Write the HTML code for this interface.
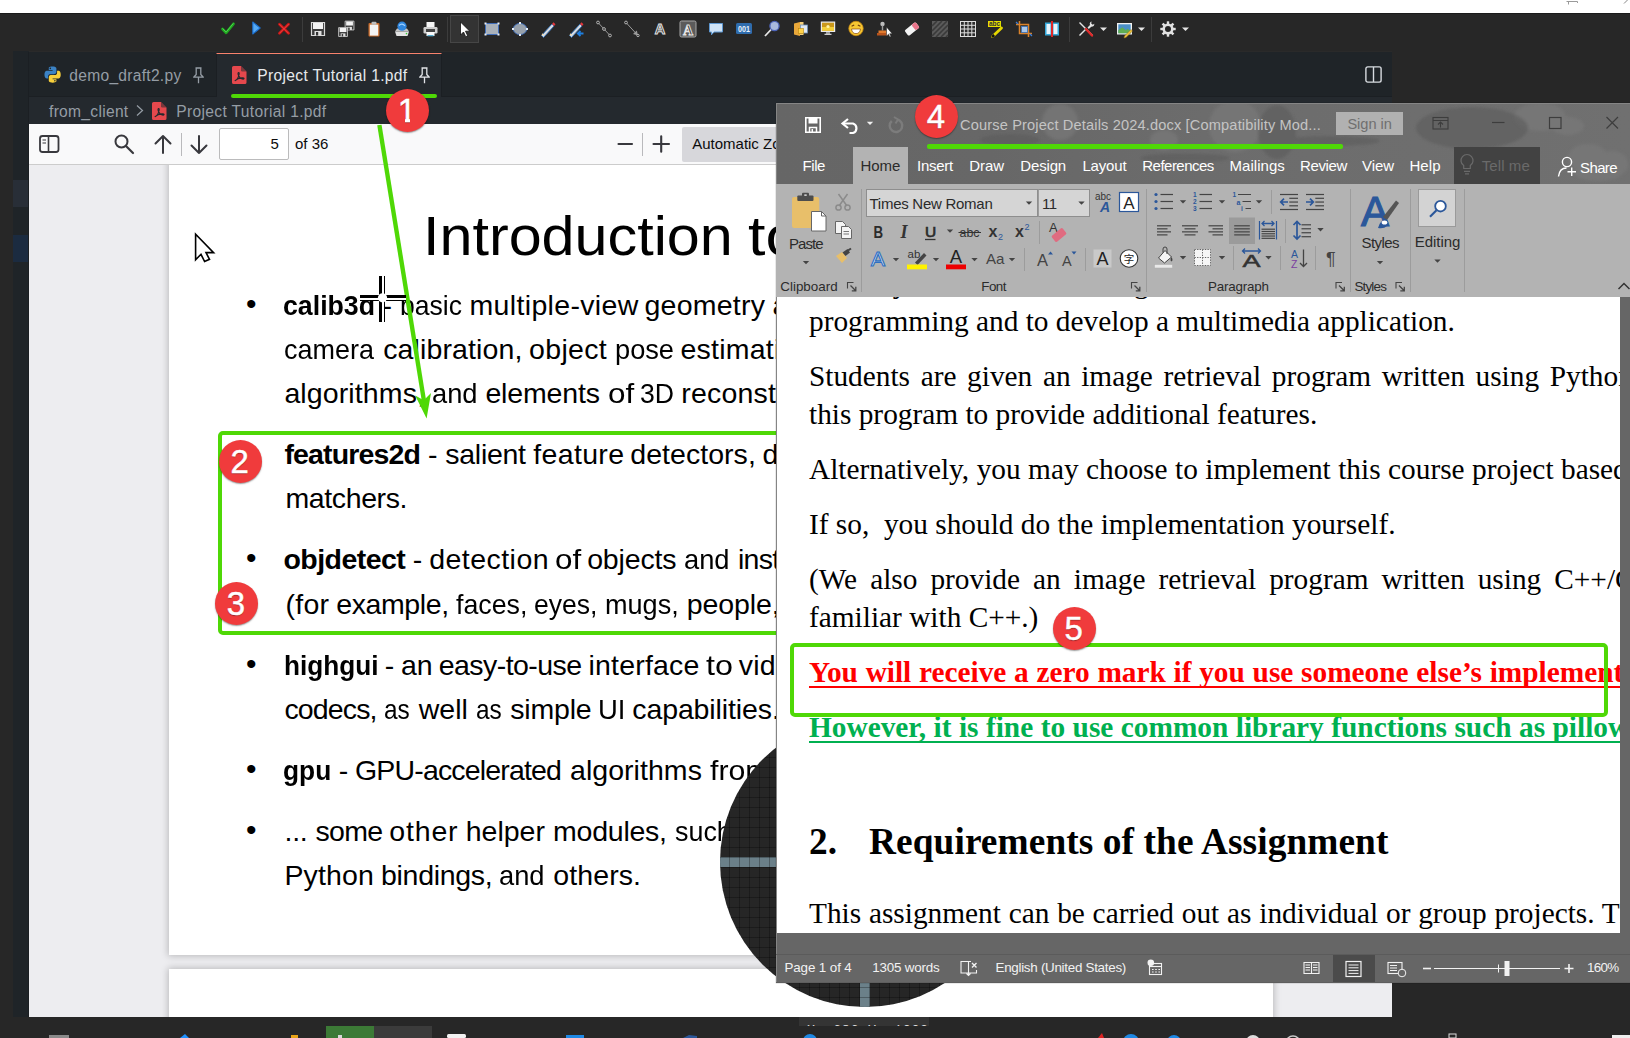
<!DOCTYPE html>
<html lang="en"><head><meta charset="utf-8"><title>Annotated screenshot</title>
<style>
html,body{margin:0;padding:0}
body{width:1630px;height:1038px;overflow:hidden;position:relative;background:#272727;font-family:'Liberation Sans',sans-serif}
div{box-sizing:border-box}
svg{position:absolute;overflow:visible}
.abs{position:absolute}
.step{position:absolute;border-radius:50%;background:#f03b3c;color:#fff;text-align:center;font:normal 33px 'Liberation Sans',sans-serif;box-shadow:0 1px 1.5px rgba(0,0,0,.4);text-shadow:0 1px 1px rgba(0,0,0,.35);-webkit-text-stroke:.45px #fff;padding-right:1.5px}
</style></head><body>

<div style="position:absolute;left:0px;top:0px;width:1630px;height:13px;background:#fff;"></div>
<svg style="left:0;top:0" width="1630" height="13"><path d="M1566.5 1.5h11v1.5M1568.5 4.5v-3" stroke="#9a9a9a" fill="none"/><path d="M1624 3.5l4-4" stroke="#888" fill="none"/></svg>
<div id="toolbar" class="abs" style="left:0;top:13px;width:1630px;height:38px;background:#272727;border-top:1px solid #1a1a1a">
<svg style="left:0;top:-14px" width="1630" height="64"><g transform="translate(220.0,20.5) scale(1)"><path d="M2.5 8.5l3.6 3.8l7.4-9" fill="none" stroke="#1fa51f" stroke-width="2.7" stroke-linecap="round" stroke-linejoin="round"/><path d="M2.8 8.3l3.3 3.400l7-8.500" fill="none" stroke="#4fd24f" stroke-width="1" stroke-linecap="round"/></g><g transform="translate(248.5,20.0) scale(1)"><path d="M4.3 2l7.400 6l-7.400 6z" fill="#55aaf5" stroke="#1b6fd0" stroke-width="1.100" stroke-linejoin="round"/></g><g transform="translate(276.0,20.7) scale(1)"><path d="M3.500 3.500l9 9M12.500 3.500l-9 9" fill="none" stroke="#c81414" stroke-width="2.800" stroke-linecap="round"/><path d="M3.500 3.500l9 9M12.500 3.500l-9 9" fill="none" stroke="#f04a4a" stroke-width=".900" stroke-linecap="round"/></g><path d="M302.5 17v25M447.5 17v25M1069.5 17v25M1151.5 17v25" stroke="#3c3c3c" stroke-width="1"/><g transform="translate(310.0,21.0) scale(1)"><path d="M1.5 1.5h13v13h-13z" fill="#3a3a3a" stroke="#d8d8d8" stroke-width="1.2"/><rect x="3" y="2" width="10" height="6" fill="#f2f2f2"/><rect x="4.5" y="10" width="7" height="4.5" fill="#e0e0e0"/><rect x="6" y="11" width="2.2" height="3.5" fill="#333"/></g><g transform="translate(344.1,20.1) scale(0.68)"><path d="M1.5 1.5h13v13h-13z" fill="#3a3a3a" stroke="#d8d8d8" stroke-width="1.2"/><rect x="3" y="2" width="10" height="6" fill="#f2f2f2"/><rect x="4.5" y="10" width="7" height="4.5" fill="#e0e0e0"/><rect x="6" y="11" width="2.2" height="3.5" fill="#333"/></g><g transform="translate(337.6,26.6) scale(0.68)"><path d="M1.5 1.5h13v13h-13z" fill="#3a3a3a" stroke="#d8d8d8" stroke-width="1.2"/><rect x="3" y="2" width="10" height="6" fill="#f2f2f2"/><rect x="4.5" y="10" width="7" height="4.5" fill="#e0e0e0"/><rect x="6" y="11" width="2.2" height="3.5" fill="#333"/></g><g transform="translate(366.0,21.0) scale(1)"><rect x="2.5" y="2" width="11" height="13.5" rx="1" fill="#c96a28"/><rect x="3.8" y="3.6" width="8.4" height="11" fill="#f4f4f4"/><rect x="5.5" y="0.8" width="5" height="3" rx="1" fill="#bdbdbd"/></g><g transform="translate(394.0,21.0) scale(1)"><path d="M1 10.5h14l-1.5 4.5h-11z" fill="#e3e3e3"/><path d="M1 10.5l2-3h10l2 3z" fill="#c5c5c5"/><circle cx="8" cy="5.2" r="4.6" fill="#2f86dd"/><path d="M5 4.5q3-3 6 .3" stroke="#9fd0ff" fill="none" stroke-width="1.2"/><circle cx="12.5" cy="12.6" r=".8" fill="#3c3"/></g><g transform="translate(422.5,21.0) scale(1)"><rect x="4" y="1" width="8" height="6" fill="#f5f5f5"/><rect x="1" y="6" width="14" height="6.5" rx="1.2" fill="#cfcfcf"/><rect x="3.5" y="8" width="9" height="3" fill="#444"/><rect x="4" y="11" width="8" height="4" fill="#fafafa"/><rect x="5" y="14" width="6" height="1.3" fill="#5ac"/></g><rect x="450.5" y="15.5" width="28" height="27" fill="#333333" stroke="#464646"/><g transform="translate(456.0,21.0) scale(1)"><path d="M4.5 1v13l3-3l2.2 4.7l2-0.9l-2.2-4.6h4.3z" fill="#fff" stroke="#111" stroke-width=".8" stroke-linejoin="round"/></g><g transform="translate(484.0,21.0) scale(1)"><rect x="1.500" y="2.500" width="13" height="11" fill="#a9b1ba" stroke="#3d6fc0" stroke-width=".900"/><g fill="#e8effa"><rect x=".500" y="1.500" width="2" height="2"/><rect x="13.500" y="1.500" width="2" height="2"/><rect x=".500" y="12.500" width="2" height="2"/><rect x="13.500" y="12.500" width="2" height="2"/></g></g><g transform="translate(512.0,21.0) scale(1)"><ellipse cx="8" cy="8" rx="6.700" ry="5.600" fill="#98a1ab" stroke="#3d6fc0" stroke-width=".900"/><g fill="#dfe9f7"><rect x="7" y="1" width="2" height="2"/><rect x="7" y="13" width="2" height="2"/><rect x="0" y="7" width="2" height="2"/><rect x="14" y="7" width="2" height="2"/></g></g><g transform="translate(540.0,21.0) scale(1)"><path d="M1.5 14.5l10.5-11.5l2 2l-10.5 11.5z" fill="#d9dde2" stroke="#2f6fb7" stroke-width=".9"/><path d="M12 3l1.5-1.7l2 2l-1.5 1.7z" fill="#e2363a"/><path d="M1.5 14.5l0.8-2.2l1.5 1.5z" fill="#f1d9a0"/></g><g transform="translate(568.0,21.0) scale(1)"><path d="M1.5 14.5l10.5-11.5l2 2l-10.5 11.5z" fill="#d9dde2" stroke="#2f6fb7" stroke-width=".9"/><path d="M12 3l1.5-1.7l2 2l-1.5 1.7z" fill="#e2363a"/><path d="M1.5 14.5l0.8-2.2l1.5 1.5z" fill="#f1d9a0"/><path d="M15.5 12.5h-5M12.5 10l-2.7 2.5l2.7 2.5" stroke="#1e7fe0" stroke-width="1.8" fill="none"/></g><g transform="translate(596.0,21.0) scale(1)"><path d="M2 1.5l12 13" stroke="#9a9a9a" stroke-width="1"/><g fill="#262626" stroke="#bdbdbd" stroke-width=".9"><circle cx="2" cy="1.5" r="1.4"/><circle cx="8" cy="8" r="1.4"/><circle cx="14" cy="14.5" r="1.4"/></g></g><g transform="translate(624.0,21.0) scale(1)"><path d="M2 1.5l11 12" stroke="#9a9a9a" stroke-width="1"/><path d="M14 14.5l-5-1.6l3.8-3.4z" fill="#9a9a9a"/><g fill="#262626" stroke="#bdbdbd" stroke-width=".9"><circle cx="2" cy="1.5" r="1.4"/><circle cx="14" cy="14.5" r="1.2"/></g></g><text x="660" y="34.200" font-family="'Liberation Sans',sans-serif" font-weight="bold" font-size="14.500" text-anchor="middle" fill="#262626" stroke="#e2e2e2" stroke-width="1">A</text><rect x="680" y="21" width="16" height="16" rx="1.5" fill="#5b5b5b" stroke="#a8a8a8" stroke-width="1"/><text x="688" y="34.6" font-family="'Liberation Serif',serif" font-weight="bold" font-size="14" text-anchor="middle" fill="#3a3a3a" stroke="#e6e6e6" stroke-width=".9">A</text><g transform="translate(708.0,20.5) scale(1)"><path d="M1.5 3h13v8.5h-8.5l-2.5 2.8v-2.8h-2z" fill="#cfe2f5" stroke="#5f98d1" stroke-width="1"/></g><rect x="736" y="23" width="16" height="11" rx="1.5" fill="#2f6cad"/><text x="744" y="32.2" font-family="'Liberation Sans',sans-serif" font-weight="bold" font-size="9" text-anchor="middle" fill="#e8f1fb" textLength="12" lengthAdjust="spacingAndGlyphs">001</text><g transform="translate(764.0,21.0) scale(1)"><path d="M1 15l7-7.5" stroke="#e8e8e8" stroke-width="1.8"/><circle cx="10.5" cy="5" r="4.6" fill="#a9b9dd" stroke="#4c63b8" stroke-width="1.3"/></g><g transform="translate(792.0,21.0) scale(1)"><path d="M2 2.5l6-1.5v14l-6-1.5z" fill="#e9a83a"/><path d="M8 1h3.5v13h-3.5z" fill="#f5cf7a"/><rect x="8.5" y="4" width="7" height="8" fill="#dfe8f3" stroke="#6b8fb8" stroke-width=".8"/><rect x="6.5" y="7.5" width="5" height="5" fill="#ffd24a" stroke="#b8860b" stroke-width=".6"/></g><g transform="translate(820.0,20.5) scale(1)"><rect x=".8" y="1" width="14.4" height="10.5" fill="#e9e9e9"/><rect x="2" y="2.2" width="12" height="8" fill="#c9971a"/><rect x="2" y="6.5" width="12" height="3.7" fill="#f2cf3a"/><circle cx="8" cy="6" r="1.6" fill="#fff3a8"/><rect x="6" y="11.5" width="4" height="2" fill="#9a9a9a"/><rect x="4.5" y="13.2" width="7" height="1.3" fill="#cfcfcf"/></g><g transform="translate(848.0,20.5) scale(1)"><circle cx="8" cy="8" r="7.2" fill="#f7c733" stroke="#c98a10" stroke-width=".8"/><path d="M3.5 8.5h9q-.6 4.6-4.5 4.6t-4.500-4.600z" fill="#fff" stroke="#8a4a10" stroke-width=".7"/><path d="M3.6 5.8l2.600-1.200M12.4 5.800l-2.600-1.200" stroke="#6b3b0a" stroke-width="1.1"/></g><g transform="translate(876.0,21.0) scale(1)"><circle cx="6.5" cy="3" r="2.2" fill="#bdbdbd"/><rect x="5.8" y="4.5" width="1.4" height="5" fill="#9a9a9a"/><path d="M2.5 9.500h8v2.500h-8z" fill="#e07b2e"/><rect x="1" y="12" width="11" height="2.5" fill="#b9541c"/><path d="M10.500 6v9l2-1.800l1.300 2.800l1.200-.6l-1.300-2.700h2.500z" fill="#fff" stroke="#222" stroke-width=".5"/></g><g transform="translate(904.0,21.0) scale(1)"><g transform="rotate(-38 8 8)"><rect x="1" y="4.500" width="14" height="7" rx="1.500" fill="#f3f3f3"/><rect x="10" y="4.500" width="5" height="7" rx="1.500" fill="#e8748a"/></g></g><rect x="932" y="21" width="16" height="16" fill="#5a5a5a"/><path d="M932 26l5-5M932 31l10-10M932 36l15-15M936 37l12-12M941 37l7-7M946 37l2-2" stroke="#3a3a3a" stroke-width="1.600"/><rect x="960.500" y="21.500" width="15" height="15" fill="#2b2b2b" stroke="#dedede"/><path d="M964.300 21.500v15M968 21.500v15M971.800 21.500v15M960.500 25.300h15M960.500 29h15M960.500 32.800h15" stroke="#dedede" stroke-width="1"/><rect x="988" y="21" width="13" height="6" fill="#e8e000"/><text x="994.500" y="26.300" font-family="'Liberation Sans',sans-serif" font-weight="bold" font-size="6.500" text-anchor="middle" fill="#333">abc</text><path d="M992.500 36.500l9-8.500" stroke="#e6d800" stroke-width="2.800" stroke-linecap="round"/><path d="M992 37l2.200-2" stroke="#111" stroke-width="2.400"/><g transform="translate(1016.0,21.0) scale(1)"><path d="M3.500 0v12.500h12.500M0 3.500h12.500v12.500" fill="none" stroke="#d9822b" stroke-width="1.500"/><rect x="5.500" y="5.500" width="6" height="6" fill="#a9c7ea" stroke="#3f74b8" stroke-width=".8"/><path d="M0 1l2 2M16 15l-2-2" stroke="#3b7fd9" stroke-width="1.200"/></g><g transform="translate(1044.0,21.0) scale(1)"><rect x="1" y="1.500" width="14" height="13" fill="#35a7d8"/><rect x="2.500" y="3" width="4" height="10" fill="#e9f4fb"/><rect x="9.500" y="3" width="4" height="10" fill="#e9f4fb"/><rect x="7" y="0" width="2" height="16" fill="#e02626"/></g><g transform="translate(1078.0,21.0) scale(1)"><path d="M1.500 1.500l13 13" stroke="#e4e4e4" stroke-width="1.400"/><path d="M1.500 14.500l6.500-6.500" stroke="#e4e4e4" stroke-width="1.400"/><path d="M8 8l6 6.500" stroke="#e02a2a" stroke-width="2.400" stroke-linecap="round"/><path d="M9.500 6.500l2.500-2.500q-1-2.500 1.600-3.500l-.4 2l1.600 1.200l1.500-1q.2 3-3 3l-2.500 2.300z" fill="#e4e4e4"/></g><path d="M1100.0 27.5h7l-3.5 3.5z" fill="#e6e6e6"/><g transform="translate(1116.5,21.0) scale(1)"><rect x=".5" y="2" width="15" height="11.500" fill="#f2f2f2"/><rect x="1.800" y="3.300" width="12.400" height="8.900" fill="#4a90c8"/><path d="M1.800 12.200v-3l4-3l3.500 3l2-1.500l2.900 2.500v2z" fill="#5fae54"/><path d="M8 15l6.500-6.500l1.500 1.500l-6.500 6.500l-2 .5z" fill="#f0c23a" stroke="#8a6d1a" stroke-width=".5"/></g><path d="M1138.0 27.5h7l-3.5 3.5z" fill="#e6e6e6"/><g transform="translate(1160.0,21.0) scale(1)"><circle cx="8" cy="8" r="4.300" fill="none" stroke="#e2e2e2" stroke-width="2.600"/><g stroke="#e2e2e2" stroke-width="2.400"><path d="M8 .3v3" transform="rotate(0 8 8)"/><path d="M8 .3v3" transform="rotate(45 8 8)"/><path d="M8 .3v3" transform="rotate(90 8 8)"/><path d="M8 .3v3" transform="rotate(135 8 8)"/><path d="M8 .3v3" transform="rotate(180 8 8)"/><path d="M8 .3v3" transform="rotate(225 8 8)"/><path d="M8 .3v3" transform="rotate(270 8 8)"/><path d="M8 .3v3" transform="rotate(315 8 8)"/></g></g><path d="M1182.0 27.5h7l-3.5 3.5z" fill="#e6e6e6"/></svg>
</div>
<div id="vscode" class="abs" style="left:13px;top:51px;width:1379px;height:966px;background:#24292e;overflow:hidden">
<div class="abs" style="left:-13px;top:-51px;width:1630px;height:1038px">
<div style="position:absolute;left:13px;top:51px;width:1379px;height:46px;background:#1f2428;"></div>
<div style="position:absolute;left:13px;top:51px;width:1379px;height:1px;background:#2a2a2a;"></div>
<div style="position:absolute;left:13px;top:51px;width:16px;height:966px;background:#1f2428;"></div>
<div style="position:absolute;left:13px;top:180px;width:16px;height:27px;background:#282e37;"></div>
<div style="position:absolute;left:13px;top:235px;width:16px;height:27px;background:#1b2b40;"></div>
<div style="position:absolute;left:28px;top:52px;width:1px;height:966px;background:#1b1f23;"></div>
<div style="position:absolute;left:216px;top:53px;width:226px;height:44px;background:#24292e;border-top:1px solid #f9826c;border-left:1px solid #1b1f23;border-right:1px solid #1b1f23"></div>
<div style="position:absolute;left:29px;top:96px;width:188px;height:1px;background:#1b1f23;"></div>
<div style="position:absolute;left:442px;top:96px;width:950px;height:1px;background:#1b1f23;"></div>
<div style="position:absolute;left:29px;top:97px;width:1363px;height:27px;background:#24292e;"></div>
<svg style="left:43.5px;top:66px" width="17.200" height="17.200" viewBox="0 0 18 18"><path d="M8.800.500c-4 0-3.800 1.700-3.800 1.700v2h4v.700h-5.700s-2.800-.300-2.800 4 2.400 4.100 2.400 4.100h1.400v-2s-.100-2.400 2.400-2.400h4s2.300 0 2.300-2.200v-3.700s.400-2.200-4.200-2.200z" fill="#3b82c4"/><path d="M9.200 17.500c4 0 3.800-1.700 3.800-1.700v-2h-4v-.700h5.700s2.800.300 2.800-4-2.400-4.100-2.400-4.100h-1.400v2s.100 2.400-2.400 2.400h-4s-2.300 0-2.300 2.200v3.700s-.400 2.200 4.200 2.200z" fill="#f7cf3c"/><circle cx="6.600" cy="2.500" r=".800" fill="#1f2428"/><circle cx="11.400" cy="15.500" r=".800" fill="#1f2428"/></svg>
<div style="position:absolute;left:69.30px;top:66px;font:normal normal 15.6px/19px 'Liberation Sans',sans-serif;color:#959da5;white-space:pre;letter-spacing:0.274px;">demo_draft2.py</div>
<svg style="left:191.5px;top:67px" width="13" height="17" viewBox="0 0 13 17"><path d="M3.500 1h6M4.200 1v6.500l-2.500 2.700h9.600l-2.500-2.700v-6.500M6.500 10.200v6" fill="none" stroke="#959da5" stroke-width="1.300" stroke-linejoin="round"/></svg>
<svg style="left:232px;top:66px" width="15" height="18" viewBox="0 0 15 18"><path d="M1.600 0h7.400l5.500 5.500v10.900a1.600 1.600 0 0 1-1.600 1.600h-11.300a1.600 1.600 0 0 1-1.600-1.600v-14.800a1.600 1.600 0 0 1 1.600-1.600z" fill="#e5484d"/><path d="M9 0v4.300a1.200 1.200 0 0 0 1.200 1.200h4.300z" fill="#24292e" opacity=".55"/><path d="M2.800 14.800c1.600-.700 3.700-3.400 4.400-6.800c.300-1.700-1-2.100-1.200-.600c-.200 1.900 1.900 5 4.200 5.600c1.900.500 2.600-.900.800-1.100c-2.600-.300-6.200 1-8.200 2.900z" fill="none" stroke="#24292e" stroke-width="1.100"/></svg>
<div style="position:absolute;left:257.30px;top:66px;font:normal normal 15.6px/19px 'Liberation Sans',sans-serif;color:#e6e9ec;white-space:pre;letter-spacing:0.326px;">Project Tutorial 1.pdf</div>
<svg style="left:417.5px;top:67px" width="13" height="17" viewBox="0 0 13 17"><path d="M3.500 1h6M4.200 1v6.500l-2.500 2.700h9.600l-2.500-2.700v-6.500M6.500 10.200v6" fill="none" stroke="#e1e4e8" stroke-width="1.300" stroke-linejoin="round"/></svg>
<svg style="left:1365px;top:66px" width="17" height="17" viewBox="0 0 17 17"><rect x=".900" y=".900" width="15.200" height="15.200" rx="1.800" fill="none" stroke="#d7dbe0" stroke-width="1.400"/><path d="M8.500 1v15" stroke="#d7dbe0" stroke-width="1.400"/></svg>
<div style="position:absolute;left:49.00px;top:102px;font:normal normal 15.6px/19px 'Liberation Sans',sans-serif;color:#959da5;white-space:pre;letter-spacing:0.294px;">from_client</div>
<svg style="left:136px;top:104px" width="8" height="14" viewBox="0 0 8 14"><path d="M1 1.500l5.500 5l-5.500 5" fill="none" stroke="#959da5" stroke-width="1.200"/></svg>
<svg style="left:152px;top:102px" width="15" height="18" viewBox="0 0 15 18"><path d="M1.600 0h7.400l5.500 5.500v10.900a1.600 1.600 0 0 1-1.600 1.600h-11.300a1.600 1.600 0 0 1-1.600-1.600v-14.800a1.600 1.600 0 0 1 1.600-1.600z" fill="#e5484d"/><path d="M9 0v4.300a1.200 1.200 0 0 0 1.200 1.200h4.300z" fill="#24292e" opacity=".55"/><path d="M2.800 14.800c1.600-.700 3.700-3.400 4.400-6.800c.300-1.700-1-2.100-1.200-.600c-.200 1.900 1.900 5 4.200 5.600c1.900.500 2.600-.900.800-1.100c-2.600-.300-6.200 1-8.200 2.900z" fill="none" stroke="#24292e" stroke-width="1.100"/></svg>
<div style="position:absolute;left:176.30px;top:102px;font:normal normal 15.6px/19px 'Liberation Sans',sans-serif;color:#959da5;white-space:pre;letter-spacing:0.326px;">Project Tutorial 1.pdf</div>
<div style="position:absolute;left:29px;top:124px;width:1363px;height:40px;background:#f9f9fa;box-shadow:0 1px 0 #ccc"></div>
<svg style="left:0;top:0" width="1630" height="170"><rect x="40" y="136" width="18.500" height="16" rx="2.500" fill="none" stroke="#38383d" stroke-width="1.800"/><path d="M48.500 136v16" stroke="#38383d" stroke-width="1.600"/><path d="M42.500 140h3.500M42.500 143h3.500" stroke="#38383d" stroke-width="1.200"/><circle cx="121.500" cy="141.500" r="6" fill="none" stroke="#38383d" stroke-width="2"/><path d="M126 146l7 7" stroke="#38383d" stroke-width="2.200" stroke-linecap="round"/><path d="M163 153v-17M155.500 143.500l7.500-7.500l7.500 7.500" fill="none" stroke="#38383d" stroke-width="2" stroke-linecap="round" stroke-linejoin="round"/><path d="M199 136v17M191.500 145.500l7.500 7.500l7.500-7.500" fill="none" stroke="#38383d" stroke-width="2" stroke-linecap="round" stroke-linejoin="round"/><path d="M181.500 133v23M642.500 133v23" stroke="#b9b9bc" stroke-width="1"/><path d="M618.500 144h13.500" stroke="#38383d" stroke-width="2.100" stroke-linecap="round"/><path d="M653.500 144h15.500M661.200 136.200v15.600" stroke="#38383d" stroke-width="2.100" stroke-linecap="round"/></svg>
<div style="position:absolute;left:219px;top:128px;width:70px;height:32px;background:#fff;border:1px solid #bbbbbc;border-radius:2px"></div>
<div style="position:absolute;left:270.50px;top:134px;font:normal normal 15px/19px 'Liberation Sans',sans-serif;color:#0c0c0d;white-space:pre;">5</div>
<div style="position:absolute;left:295.00px;top:134px;font:normal normal 15px/19px 'Liberation Sans',sans-serif;color:#0c0c0d;white-space:pre;letter-spacing:0.025px;">of 36</div>
<div style="position:absolute;left:682px;top:127px;width:130px;height:35px;background:#d7d7db;border-radius:2px"></div>
<div style="position:absolute;left:692.30px;top:134px;font:normal normal 15px/19px 'Liberation Sans',sans-serif;color:#0c0c0d;white-space:pre;letter-spacing:-0.016px;">Automatic Zoom</div>
<div class="abs" style="left:29px;top:165px;width:1363px;height:852px;background:#ededf0;overflow:hidden"><div class="abs" style="left:-29px;top:-165px;width:1630px;height:1038px">
<div style="position:absolute;left:169px;top:160px;width:1104px;height:795px;background:#fff;box-shadow:0 0 7px 1px rgba(0,0,0,.22)"></div>
<div style="position:absolute;left:169px;top:969px;width:1104px;height:60px;background:#fff;box-shadow:0 0 7px 1px rgba(0,0,0,.22)"></div>
<div class="ln"><div style="position:absolute;left:423.41px;top:203px;font:normal normal 56px/65px 'Liberation Sans',sans-serif;color:#000;white-space:pre;transform:scaleX(1.0585);transform-origin:0 0;">Introduction</div>
<div style="position:absolute;left:747.89px;top:203px;font:normal normal 56px/65px 'Liberation Sans',sans-serif;color:#000;white-space:pre;transform:scaleX(1.1206);transform-origin:0 0;">to</div>
<div style="position:absolute;left:813.13px;top:203px;font:normal normal 56px/65px 'Liberation Sans',sans-serif;color:#000;white-space:pre;transform:scaleX(0.9426);transform-origin:0 0;">OpenCV</div></div>
<div style="position:absolute;left:246.00px;top:286px;font:normal normal 30px/35px 'Liberation Sans',sans-serif;color:#000;white-space:pre;">•</div>
<div style="position:absolute;left:246.00px;top:435px;font:normal normal 30px/35px 'Liberation Sans',sans-serif;color:#000;white-space:pre;">•</div>
<div style="position:absolute;left:246.00px;top:540px;font:normal normal 30px/35px 'Liberation Sans',sans-serif;color:#000;white-space:pre;">•</div>
<div style="position:absolute;left:246.00px;top:646px;font:normal normal 30px/35px 'Liberation Sans',sans-serif;color:#000;white-space:pre;">•</div>
<div style="position:absolute;left:246.00px;top:751px;font:normal normal 30px/35px 'Liberation Sans',sans-serif;color:#000;white-space:pre;">•</div>
<div style="position:absolute;left:246.00px;top:812px;font:normal normal 30px/35px 'Liberation Sans',sans-serif;color:#000;white-space:pre;">•</div>
<div class="ln"><div style="position:absolute;left:283.46px;top:288px;font:normal bold 28.5px/34px 'Liberation Sans',sans-serif;color:#000;white-space:pre;transform:scaleX(0.9373);transform-origin:0 0;">calib3d</div>
<div style="position:absolute;left:382.57px;top:288px;font:normal normal 28.5px/34px 'Liberation Sans',sans-serif;color:#000;white-space:pre;">-</div>
<div style="position:absolute;left:399.95px;top:288px;font:normal normal 28.5px/34px 'Liberation Sans',sans-serif;color:#000;white-space:pre;transform:scaleX(0.9312);transform-origin:0 0;">basic</div>
<div style="position:absolute;left:469.56px;top:288px;font:normal normal 28.5px/34px 'Liberation Sans',sans-serif;color:#000;white-space:pre;letter-spacing:0.334px;">multiple-view</div>
<div style="position:absolute;left:644.52px;top:288px;font:normal normal 28.5px/34px 'Liberation Sans',sans-serif;color:#000;white-space:pre;letter-spacing:0.239px;">geometry</div>
<div style="position:absolute;left:772.54px;top:288px;font:normal normal 28.5px/34px 'Liberation Sans',sans-serif;color:#000;white-space:pre;letter-spacing:0.115px;">algorithms,</div>
<div style="position:absolute;left:920.73px;top:288px;font:normal normal 28.5px/34px 'Liberation Sans',sans-serif;color:#000;white-space:pre;letter-spacing:-0.609px;">single</div>
<div style="position:absolute;left:998.52px;top:288px;font:normal normal 28.5px/34px 'Liberation Sans',sans-serif;color:#000;white-space:pre;transform:scaleX(0.9579);transform-origin:0 0;">and</div>
<div style="position:absolute;left:1053.28px;top:288px;font:normal normal 28.5px/34px 'Liberation Sans',sans-serif;color:#000;white-space:pre;letter-spacing:-0.203px;">stereo</div></div>
<div class="ln"><div style="position:absolute;left:284.45px;top:332px;font:normal normal 28.5px/34px 'Liberation Sans',sans-serif;color:#000;white-space:pre;transform:scaleX(0.9466);transform-origin:0 0;">camera</div>
<div style="position:absolute;left:383.17px;top:332px;font:normal normal 28.5px/34px 'Liberation Sans',sans-serif;color:#000;white-space:pre;letter-spacing:0.128px;">calibration,</div>
<div style="position:absolute;left:529.06px;top:332px;font:normal normal 28.5px/34px 'Liberation Sans',sans-serif;color:#000;white-space:pre;letter-spacing:0.331px;">object</div>
<div style="position:absolute;left:615.09px;top:332px;font:normal normal 28.5px/34px 'Liberation Sans',sans-serif;color:#000;white-space:pre;transform:scaleX(0.9548);transform-origin:0 0;">pose</div>
<div style="position:absolute;left:680.45px;top:332px;font:normal normal 28.5px/34px 'Liberation Sans',sans-serif;color:#000;white-space:pre;letter-spacing:0.226px;">estimation,</div>
<div style="position:absolute;left:828.17px;top:332px;font:normal normal 28.5px/34px 'Liberation Sans',sans-serif;color:#000;white-space:pre;letter-spacing:-0.203px;">stereo</div>
<div style="position:absolute;left:912.60px;top:332px;font:normal normal 28.5px/34px 'Liberation Sans',sans-serif;color:#000;white-space:pre;letter-spacing:-0.210px;">correspondence</div></div>
<div class="ln"><div style="position:absolute;left:284.40px;top:376px;font:normal normal 28.5px/34px 'Liberation Sans',sans-serif;color:#000;white-space:pre;letter-spacing:0.115px;">algorithms,</div>
<div style="position:absolute;left:431.65px;top:376px;font:normal normal 28.5px/34px 'Liberation Sans',sans-serif;color:#000;white-space:pre;transform:scaleX(0.9579);transform-origin:0 0;">and</div>
<div style="position:absolute;left:485.40px;top:376px;font:normal normal 28.5px/34px 'Liberation Sans',sans-serif;color:#000;white-space:pre;letter-spacing:-0.153px;">elements</div>
<div style="position:absolute;left:607.53px;top:376px;font:normal normal 28.5px/34px 'Liberation Sans',sans-serif;color:#000;white-space:pre;transform:scaleX(1.1010);transform-origin:0 0;">of</div>
<div style="position:absolute;left:640.14px;top:376px;font:normal normal 28.5px/34px 'Liberation Sans',sans-serif;color:#000;white-space:pre;transform:scaleX(0.9334);transform-origin:0 0;">3D</div>
<div style="position:absolute;left:681.37px;top:376px;font:normal normal 28.5px/34px 'Liberation Sans',sans-serif;color:#000;white-space:pre;letter-spacing:0.175px;">reconstruction.</div></div>
<div class="ln"><div style="position:absolute;left:284.40px;top:437px;font:normal bold 28.5px/34px 'Liberation Sans',sans-serif;color:#000;white-space:pre;letter-spacing:-0.836px;">features2d</div>
<div style="position:absolute;left:427.99px;top:437px;font:normal normal 28.5px/34px 'Liberation Sans',sans-serif;color:#000;white-space:pre;">-</div>
<div style="position:absolute;left:445.31px;top:437px;font:normal normal 28.5px/34px 'Liberation Sans',sans-serif;color:#000;white-space:pre;letter-spacing:-0.280px;">salient</div>
<div style="position:absolute;left:533.29px;top:437px;font:normal normal 28.5px/34px 'Liberation Sans',sans-serif;color:#000;white-space:pre;letter-spacing:0.331px;">feature</div>
<div style="position:absolute;left:630.32px;top:437px;font:normal normal 28.5px/34px 'Liberation Sans',sans-serif;color:#000;white-space:pre;letter-spacing:0.039px;">detectors,</div>
<div style="position:absolute;left:762.48px;top:437px;font:normal normal 28.5px/34px 'Liberation Sans',sans-serif;color:#000;white-space:pre;letter-spacing:-0.105px;">descriptors,</div>
<div style="position:absolute;left:915.32px;top:437px;font:normal normal 28.5px/34px 'Liberation Sans',sans-serif;color:#000;white-space:pre;transform:scaleX(0.9579);transform-origin:0 0;">and</div>
<div style="position:absolute;left:969.07px;top:437px;font:normal normal 28.5px/34px 'Liberation Sans',sans-serif;color:#000;white-space:pre;letter-spacing:0.160px;">descriptor</div></div>
<div class="ln"><div style="position:absolute;left:285.40px;top:481px;font:normal normal 28.5px/34px 'Liberation Sans',sans-serif;color:#000;white-space:pre;letter-spacing:-0.375px;">matchers.</div></div>
<div class="ln"><div style="position:absolute;left:283.40px;top:542px;font:normal bold 28.5px/34px 'Liberation Sans',sans-serif;color:#000;white-space:pre;letter-spacing:-0.537px;">objdetect</div>
<div style="position:absolute;left:412.85px;top:542px;font:normal normal 28.5px/34px 'Liberation Sans',sans-serif;color:#000;white-space:pre;">-</div>
<div style="position:absolute;left:429.17px;top:542px;font:normal normal 28.5px/34px 'Liberation Sans',sans-serif;color:#000;white-space:pre;letter-spacing:0.466px;">detection</div>
<div style="position:absolute;left:554.64px;top:542px;font:normal normal 28.5px/34px 'Liberation Sans',sans-serif;color:#000;white-space:pre;transform:scaleX(1.1010);transform-origin:0 0;">of</div>
<div style="position:absolute;left:587.18px;top:542px;font:normal normal 28.5px/34px 'Liberation Sans',sans-serif;color:#000;white-space:pre;letter-spacing:-0.166px;">objects</div>
<div style="position:absolute;left:684.18px;top:542px;font:normal normal 28.5px/34px 'Liberation Sans',sans-serif;color:#000;white-space:pre;transform:scaleX(0.9579);transform-origin:0 0;">and</div>
<div style="position:absolute;left:737.93px;top:542px;font:normal normal 28.5px/34px 'Liberation Sans',sans-serif;color:#000;white-space:pre;letter-spacing:-0.689px;">instances</div>
<div style="position:absolute;left:860.39px;top:542px;font:normal normal 28.5px/34px 'Liberation Sans',sans-serif;color:#000;white-space:pre;transform:scaleX(1.1010);transform-origin:0 0;">of</div>
<div style="position:absolute;left:892.92px;top:542px;font:normal normal 28.5px/34px 'Liberation Sans',sans-serif;color:#000;white-space:pre;transform:scaleX(1.0669);transform-origin:0 0;">the</div>
<div style="position:absolute;left:942.46px;top:542px;font:normal normal 28.5px/34px 'Liberation Sans',sans-serif;color:#000;white-space:pre;letter-spacing:-0.065px;">predefined</div>
<div style="position:absolute;left:1084.85px;top:542px;font:normal normal 28.5px/34px 'Liberation Sans',sans-serif;color:#000;white-space:pre;transform:scaleX(0.8944);transform-origin:0 0;">classes</div></div>
<div class="ln"><div style="position:absolute;left:285.40px;top:587px;font:normal normal 28.5px/34px 'Liberation Sans',sans-serif;color:#000;white-space:pre;letter-spacing:0.299px;">(for</div>
<div style="position:absolute;left:336.18px;top:587px;font:normal normal 28.5px/34px 'Liberation Sans',sans-serif;color:#000;white-space:pre;letter-spacing:-0.385px;">example,</div>
<div style="position:absolute;left:455.77px;top:587px;font:normal normal 28.5px/34px 'Liberation Sans',sans-serif;color:#000;white-space:pre;transform:scaleX(0.9392);transform-origin:0 0;">faces,</div>
<div style="position:absolute;left:534.03px;top:587px;font:normal normal 28.5px/34px 'Liberation Sans',sans-serif;color:#000;white-space:pre;transform:scaleX(0.9321);transform-origin:0 0;">eyes,</div>
<div style="position:absolute;left:605.36px;top:587px;font:normal normal 28.5px/34px 'Liberation Sans',sans-serif;color:#000;white-space:pre;transform:scaleX(0.9503);transform-origin:0 0;">mugs,</div>
<div style="position:absolute;left:686.87px;top:587px;font:normal normal 28.5px/34px 'Liberation Sans',sans-serif;color:#000;white-space:pre;letter-spacing:-0.118px;">people,</div>
<div style="position:absolute;left:786.38px;top:587px;font:normal normal 28.5px/34px 'Liberation Sans',sans-serif;color:#000;white-space:pre;transform:scaleX(0.9266);transform-origin:0 0;">cars,</div>
<div style="position:absolute;left:850.44px;top:587px;font:normal normal 28.5px/34px 'Liberation Sans',sans-serif;color:#000;white-space:pre;transform:scaleX(0.9579);transform-origin:0 0;">and</div>
<div style="position:absolute;left:905.21px;top:587px;font:normal normal 28.5px/34px 'Liberation Sans',sans-serif;color:#000;white-space:pre;transform:scaleX(0.9225);transform-origin:0 0;">so</div>
<div style="position:absolute;left:939.27px;top:587px;font:normal normal 28.5px/34px 'Liberation Sans',sans-serif;color:#000;white-space:pre;letter-spacing:0.119px;">on).</div></div>
<div class="ln"><div style="position:absolute;left:284.48px;top:648px;font:normal bold 28.5px/34px 'Liberation Sans',sans-serif;color:#000;white-space:pre;transform:scaleX(0.9194);transform-origin:0 0;">highgui</div>
<div style="position:absolute;left:384.77px;top:648px;font:normal normal 28.5px/34px 'Liberation Sans',sans-serif;color:#000;white-space:pre;">-</div>
<div style="position:absolute;left:401.09px;top:648px;font:normal normal 28.5px/34px 'Liberation Sans',sans-serif;color:#000;white-space:pre;letter-spacing:-0.173px;">an</div>
<div style="position:absolute;left:438.79px;top:648px;font:normal normal 28.5px/34px 'Liberation Sans',sans-serif;color:#000;white-space:pre;letter-spacing:-0.554px;">easy-to-use</div>
<div style="position:absolute;left:588.48px;top:648px;font:normal normal 28.5px/34px 'Liberation Sans',sans-serif;color:#000;white-space:pre;letter-spacing:0.204px;">interface</div>
<div style="position:absolute;left:705.74px;top:648px;font:normal normal 28.5px/34px 'Liberation Sans',sans-serif;color:#000;white-space:pre;transform:scaleX(1.1329);transform-origin:0 0;">to</div>
<div style="position:absolute;left:738.79px;top:648px;font:normal normal 28.5px/34px 'Liberation Sans',sans-serif;color:#000;white-space:pre;letter-spacing:0.233px;">video</div>
<div style="position:absolute;left:814.09px;top:648px;font:normal normal 28.5px/34px 'Liberation Sans',sans-serif;color:#000;white-space:pre;letter-spacing:0.116px;">capturing,</div>
<div style="position:absolute;left:946.95px;top:648px;font:normal normal 28.5px/34px 'Liberation Sans',sans-serif;color:#000;white-space:pre;letter-spacing:-0.355px;">image</div>
<div style="position:absolute;left:1029.52px;top:648px;font:normal normal 28.5px/34px 'Liberation Sans',sans-serif;color:#000;white-space:pre;transform:scaleX(0.9579);transform-origin:0 0;">and</div>
<div style="position:absolute;left:1083.28px;top:648px;font:normal normal 28.5px/34px 'Liberation Sans',sans-serif;color:#000;white-space:pre;letter-spacing:0.233px;">video</div></div>
<div class="ln"><div style="position:absolute;left:284.40px;top:692px;font:normal normal 28.5px/34px 'Liberation Sans',sans-serif;color:#000;white-space:pre;letter-spacing:-0.859px;">codecs,</div>
<div style="position:absolute;left:384.26px;top:692px;font:normal normal 28.5px/34px 'Liberation Sans',sans-serif;color:#000;white-space:pre;transform:scaleX(0.8553);transform-origin:0 0;">as</div>
<div style="position:absolute;left:418.71px;top:692px;font:normal normal 28.5px/34px 'Liberation Sans',sans-serif;color:#000;white-space:pre;letter-spacing:0.049px;">well</div>
<div style="position:absolute;left:475.73px;top:692px;font:normal normal 28.5px/34px 'Liberation Sans',sans-serif;color:#000;white-space:pre;transform:scaleX(0.8553);transform-origin:0 0;">as</div>
<div style="position:absolute;left:510.17px;top:692px;font:normal normal 28.5px/34px 'Liberation Sans',sans-serif;color:#000;white-space:pre;letter-spacing:-0.176px;">simple</div>
<div style="position:absolute;left:598.04px;top:692px;font:normal normal 28.5px/34px 'Liberation Sans',sans-serif;color:#000;white-space:pre;transform:scaleX(0.9625);transform-origin:0 0;">UI</div>
<div style="position:absolute;left:632.27px;top:692px;font:normal normal 28.5px/34px 'Liberation Sans',sans-serif;color:#000;white-space:pre;letter-spacing:-0.112px;">capabilities.</div></div>
<div class="ln"><div style="position:absolute;left:283.48px;top:753px;font:normal bold 28.5px/34px 'Liberation Sans',sans-serif;color:#000;white-space:pre;transform:scaleX(0.9228);transform-origin:0 0;">gpu</div>
<div style="position:absolute;left:338.74px;top:753px;font:normal normal 28.5px/34px 'Liberation Sans',sans-serif;color:#000;white-space:pre;">-</div>
<div style="position:absolute;left:355.06px;top:753px;font:normal normal 28.5px/34px 'Liberation Sans',sans-serif;color:#000;white-space:pre;letter-spacing:-0.843px;">GPU-accelerated</div>
<div style="position:absolute;left:570.02px;top:753px;font:normal normal 28.5px/34px 'Liberation Sans',sans-serif;color:#000;white-space:pre;letter-spacing:0.046px;">algorithms</div>
<div style="position:absolute;left:709.57px;top:753px;font:normal normal 28.5px/34px 'Liberation Sans',sans-serif;color:#000;white-space:pre;transform:scaleX(1.0622);transform-origin:0 0;">from</div>
<div style="position:absolute;left:776.67px;top:753px;font:normal normal 28.5px/34px 'Liberation Sans',sans-serif;color:#000;white-space:pre;letter-spacing:0.535px;">different</div>
<div style="position:absolute;left:890.75px;top:753px;font:normal normal 28.5px/34px 'Liberation Sans',sans-serif;color:#000;white-space:pre;transform:scaleX(0.9332);transform-origin:0 0;">OpenCV</div>
<div style="position:absolute;left:1000.07px;top:753px;font:normal normal 28.5px/34px 'Liberation Sans',sans-serif;color:#000;white-space:pre;letter-spacing:-0.233px;">modules.</div></div>
<div class="ln"><div style="position:absolute;left:284.40px;top:814px;font:normal normal 28.5px/34px 'Liberation Sans',sans-serif;color:#000;white-space:pre;letter-spacing:-0.183px;">...</div>
<div style="position:absolute;left:315.54px;top:814px;font:normal normal 28.5px/34px 'Liberation Sans',sans-serif;color:#000;white-space:pre;letter-spacing:-0.741px;">some</div>
<div style="position:absolute;left:389.34px;top:814px;font:normal normal 28.5px/34px 'Liberation Sans',sans-serif;color:#000;white-space:pre;letter-spacing:0.824px;">other</div>
<div style="position:absolute;left:465.71px;top:814px;font:normal normal 28.5px/34px 'Liberation Sans',sans-serif;color:#000;white-space:pre;letter-spacing:-0.003px;">helper</div>
<div style="position:absolute;left:553.04px;top:814px;font:normal normal 28.5px/34px 'Liberation Sans',sans-serif;color:#000;white-space:pre;letter-spacing:-0.233px;">modules,</div>
<div style="position:absolute;left:674.70px;top:814px;font:normal normal 28.5px/34px 'Liberation Sans',sans-serif;color:#000;white-space:pre;transform:scaleX(0.9432);transform-origin:0 0;">such</div>
<div style="position:absolute;left:737.90px;top:814px;font:normal normal 28.5px/34px 'Liberation Sans',sans-serif;color:#000;white-space:pre;transform:scaleX(0.8553);transform-origin:0 0;">as</div>
<div style="position:absolute;left:771.56px;top:814px;font:normal normal 28.5px/34px 'Liberation Sans',sans-serif;color:#000;white-space:pre;transform:scaleX(0.8956);transform-origin:0 0;">FLANN</div>
<div style="position:absolute;left:862.57px;top:814px;font:normal normal 28.5px/34px 'Liberation Sans',sans-serif;color:#000;white-space:pre;transform:scaleX(0.9579);transform-origin:0 0;">and</div>
<div style="position:absolute;left:916.32px;top:814px;font:normal normal 28.5px/34px 'Liberation Sans',sans-serif;color:#000;white-space:pre;letter-spacing:-0.590px;">Google</div>
<div style="position:absolute;left:1011.60px;top:814px;font:normal normal 28.5px/34px 'Liberation Sans',sans-serif;color:#000;white-space:pre;letter-spacing:0.267px;">test</div>
<div style="position:absolute;left:1066.60px;top:814px;font:normal normal 28.5px/34px 'Liberation Sans',sans-serif;color:#000;white-space:pre;letter-spacing:-0.250px;">wrappers,</div></div>
<div class="ln"><div style="position:absolute;left:284.40px;top:858px;font:normal normal 28.5px/34px 'Liberation Sans',sans-serif;color:#000;white-space:pre;letter-spacing:0.134px;">Python</div>
<div style="position:absolute;left:380.98px;top:858px;font:normal normal 28.5px/34px 'Liberation Sans',sans-serif;color:#000;white-space:pre;letter-spacing:-0.288px;">bindings,</div>
<div style="position:absolute;left:499.46px;top:858px;font:normal normal 28.5px/34px 'Liberation Sans',sans-serif;color:#000;white-space:pre;transform:scaleX(0.9579);transform-origin:0 0;">and</div>
<div style="position:absolute;left:553.21px;top:858px;font:normal normal 28.5px/34px 'Liberation Sans',sans-serif;color:#000;white-space:pre;letter-spacing:0.116px;">others.</div></div>
</div></div>
</div></div>
<div style="position:absolute;left:0px;top:1017px;width:1630px;height:21px;background:#272727;"></div>
<div style="position:absolute;left:326px;top:1026px;width:48px;height:12px;background:#3c7a36;"></div>
<div style="position:absolute;left:374px;top:1026px;width:58px;height:12px;background:#3b3b3b;"></div>
<svg style="left:0;top:1017px" width="1630" height="21"><rect x="49" y="18" width="20" height="3" fill="#8a8a8a"/><path d="M180 21l5-4l4 4z" fill="#1e90ff"/><rect x="291" y="18" width="7" height="3" fill="#e8a317"/><rect x="338" y="18" width="4" height="3" fill="#d8d8d8"/><rect x="447" y="17" width="19" height="4" rx="1.500" fill="#f2f2f2"/><rect x="566" y="18" width="18" height="3" fill="#1e88e5"/><path d="M683 21l6-3l8 1v2z" fill="#2b579a"/><circle cx="810" cy="24" r="7" fill="#1e88e5"/><path d="M1098 21l4-5l2 5z" fill="#d22"/><circle cx="1131" cy="25" r="8" fill="#1e88e5"/><circle cx="1131" cy="26" r="5" fill="#3a4"/><circle cx="1174" cy="25" r="7" fill="#1e88e5"/><circle cx="1253" cy="25" r="7" fill="#ddd"/><circle cx="1293" cy="26" r="7" fill="none" stroke="#ccc" stroke-width="1.500"/><rect x="1449" y="17" width="7" height="4" fill="none" stroke="#ddd"/><rect x="1612" y="18" width="18" height="3" fill="#eee"/></svg>
<div style="position:absolute;left:799px;top:1017px;width:130px;height:9px;background:#343434;overflow:hidden"></div>
<div class="abs" style="left:799px;top:1017px;width:130px;height:9px;overflow:hidden"><div style="position:absolute;left:8.00px;top:5px;font:normal normal 13.5px/17px 'Liberation Mono',monospace;color:#ddd;white-space:pre;letter-spacing:0.6px;">X: 686 Y: 1003</div></div>
<div class="abs" style="left:218px;top:431px;width:640px;height:204px;border:4.3px solid #4fd806;border-radius:5px"></div>
<div id="magnifier" class="abs" style="left:720px;top:717px;width:290px;height:290px;border-radius:50%;overflow:hidden;background:#262626">
<div class="abs" style="left:0;top:140px;width:290px;height:10px;background:#6b8089"></div>
<div class="abs" style="left:140px;top:0;width:10px;height:290px;background:#6b8089"></div>
<div class="abs" style="left:0;top:0;width:290px;height:290px;background-image:repeating-linear-gradient(90deg,rgba(0,0,0,0) 0,rgba(0,0,0,0) 9px,rgba(0,0,0,.28) 9px,rgba(0,0,0,.28) 10px),repeating-linear-gradient(180deg,rgba(0,0,0,.28) 0,rgba(0,0,0,.28) 1px,rgba(0,0,0,0) 1px,rgba(0,0,0,0) 10px)"></div>
</div>
<div id="word" class="abs" style="left:776px;top:103px;width:854px;height:880px;background:#666;overflow:hidden;box-shadow:0 0 1px rgba(0,0,0,.5)">
<div class="abs" style="left:-776px;top:-103px;width:1630px;height:1038px">
<svg style="left:776px;top:103px" width="854" height="82" viewBox="776 103 854 82"><defs><linearGradient id="tg" x1="0" x2="1"><stop offset="0" stop-color="#666"/><stop offset=".25" stop-color="#676767"/><stop offset=".5" stop-color="#6c6c6c"/><stop offset="1" stop-color="#707070"/></linearGradient><filter id="bl"><feGaussianBlur stdDeviation="1.600"/></filter></defs><rect x="776" y="103" width="854" height="82" fill="url(#tg)"/><g filter="url(#bl)"><g fill="#7a7a7a" opacity=".7"><circle cx="1060" cy="122" r="18"/><ellipse cx="1164" cy="140" rx="14" ry="10"/><circle cx="1235" cy="126" r="26"/><ellipse cx="1540" cy="117" rx="26" ry="14"/><ellipse cx="1568" cy="126" rx="16" ry="9"/><ellipse cx="1588" cy="158" rx="20" ry="14"/><ellipse cx="1612" cy="164" rx="16" ry="13"/><ellipse cx="1598" cy="172" rx="24" ry="9"/></g><g fill="#5a5a5a" opacity=".6"><ellipse cx="1277" cy="132" rx="19" ry="27"/><ellipse cx="1185" cy="158" rx="45" ry="4.500"/><ellipse cx="1472" cy="128" rx="56" ry="21"/><ellipse cx="1330" cy="141" rx="50" ry="5"/><ellipse cx="1010" cy="140" rx="30" ry="6"/></g></g></svg>
<div style="position:absolute;left:776px;top:103px;width:854px;height:1px;background:#858585;"></div>
<div style="position:absolute;left:776px;top:103px;width:1px;height:880px;background:#858585;"></div>
<div style="position:absolute;left:776px;top:982px;width:854px;height:1px;background:#5e5e5e;"></div>
<div style="position:absolute;left:960.00px;top:116px;font:normal normal 14.6px/18px 'Liberation Sans',sans-serif;color:#c4c4c4;white-space:pre;letter-spacing:0.151px;">Course Project Details 2024.docx [Compatibility Mod...</div>
<div style="position:absolute;left:1336px;top:112px;width:67px;height:23px;background:#b1b1b1;"></div>
<div style="position:absolute;left:1347.40px;top:115px;font:normal normal 14.6px/18px 'Liberation Sans',sans-serif;color:#6f6f6f;white-space:pre;letter-spacing:-0.018px;">Sign in</div>
<div style="position:absolute;left:853px;top:147px;width:55px;height:37px;background:#b3b3b3;"></div>
<div style="position:absolute;left:1454px;top:147px;width:86px;height:37px;background:#424242;"></div>
<svg style="left:0;top:0" width="1630" height="200"><path d="M805.800 117.800h14.400v14.400h-14.400z" fill="none" stroke="#fff" stroke-width="1.600"/><rect x="808.500" y="118" width="9" height="5.500" fill="#fff"/><path d="M809.500 132v-4.500h7v4.500M812.300 132v-3" fill="none" stroke="#fff" stroke-width="1.500"/><path d="M848 119l-5.500 4.500l5.500 4.500" fill="none" stroke="#fff" stroke-width="2.200" stroke-linejoin="miter"/><path d="M843.500 123.500h9.500a5 5 0 0 1 0 9.500h-3.500" fill="none" stroke="#fff" stroke-width="2.200"/><path d="M866.8 121.7h6.4l-3.2 3.400z" fill="#f0f0f0"/><path d="M897 119.500a6.300 6.300 0 1 1 -5.200 1.500" fill="none" stroke="#7c7c7c" stroke-width="2.400"/><path d="M894 117l4 2.500l-2.500 4" fill="none" stroke="#7c7c7c" stroke-width="2"/><rect x="1433" y="117.500" width="15" height="11.500" fill="none" stroke="#3d3d3d" stroke-width="1.100"/><path d="M1433 120.500h15" stroke="#3d3d3d"/><path d="M1440.500 127.500v-5M1438 124.500l2.500-2.500l2.500 2.500" fill="none" stroke="#3d3d3d" stroke-width="1.100"/><path d="M1492 122.500h12.500" stroke="#3d3d3d" stroke-width="1.200"/><rect x="1549.500" y="117.500" width="11.500" height="11" fill="none" stroke="#3d3d3d" stroke-width="1.200"/><path d="M1606.500 117l11.500 11.500M1618 117l-11.500 11.500" stroke="#3d3d3d" stroke-width="1.200"/><path d="M1463.700 165.500A6 6 0 1 1 1470.300 165.500V168.500H1463.700ZM1464 171.300h6M1465 173.800h4" fill="none" stroke="#6a6a6a" stroke-width="1.200"/><circle cx="1567" cy="162" r="4.600" fill="none" stroke="#fff" stroke-width="1.400"/><path d="M1558.500 176.500q1-8.500 8-8.500" fill="none" stroke="#fff" stroke-width="1.400"/><path d="M1567.500 171.700h8.500M1571.700 167.500v8.400" stroke="#fff" stroke-width="1.400"/></svg>
<div style="position:absolute;left:802.50px;top:156px;font:normal normal 15px/19px 'Liberation Sans',sans-serif;color:#fff;white-space:pre;letter-spacing:-0.418px;">File</div>
<div style="position:absolute;left:860.40px;top:156px;font:normal normal 15px/19px 'Liberation Sans',sans-serif;color:#2b2b2b;white-space:pre;letter-spacing:-0.004px;">Home</div>
<div style="position:absolute;left:917.00px;top:156px;font:normal normal 15px/19px 'Liberation Sans',sans-serif;color:#fff;white-space:pre;letter-spacing:-0.253px;">Insert</div>
<div style="position:absolute;left:969.30px;top:156px;font:normal normal 15px/19px 'Liberation Sans',sans-serif;color:#fff;white-space:pre;letter-spacing:-0.079px;">Draw</div>
<div style="position:absolute;left:1020.30px;top:156px;font:normal normal 15px/19px 'Liberation Sans',sans-serif;color:#fff;white-space:pre;letter-spacing:-0.167px;">Design</div>
<div style="position:absolute;left:1082.40px;top:156px;font:normal normal 15px/19px 'Liberation Sans',sans-serif;color:#fff;white-space:pre;letter-spacing:-0.174px;">Layout</div>
<div style="position:absolute;left:1142.30px;top:156px;font:normal normal 15px/19px 'Liberation Sans',sans-serif;color:#fff;white-space:pre;letter-spacing:-0.522px;">References</div>
<div style="position:absolute;left:1229.50px;top:156px;font:normal normal 15px/19px 'Liberation Sans',sans-serif;color:#fff;white-space:pre;letter-spacing:0.034px;">Mailings</div>
<div style="position:absolute;left:1300.00px;top:156px;font:normal normal 15px/19px 'Liberation Sans',sans-serif;color:#fff;white-space:pre;letter-spacing:-0.365px;">Review</div>
<div style="position:absolute;left:1362.00px;top:156px;font:normal normal 15px/19px 'Liberation Sans',sans-serif;color:#fff;white-space:pre;letter-spacing:-0.062px;">View</div>
<div style="position:absolute;left:1409.40px;top:156px;font:normal normal 15px/19px 'Liberation Sans',sans-serif;color:#fff;white-space:pre;letter-spacing:0.135px;">Help</div>
<div style="position:absolute;left:1481.80px;top:156px;font:normal normal 15px/19px 'Liberation Sans',sans-serif;color:#6a6a6a;white-space:pre;letter-spacing:0.069px;">Tell me</div>
<div style="position:absolute;left:1580.00px;top:158px;font:normal normal 15px/19px 'Liberation Sans',sans-serif;color:#fff;white-space:pre;letter-spacing:-0.606px;">Share</div>
<div style="position:absolute;left:776px;top:184px;width:854px;height:113px;background:#b3b3b3;"></div>
<div style="position:absolute;left:789.00px;top:234px;font:normal normal 15px/19px 'Liberation Sans',sans-serif;color:#2b2b2b;white-space:pre;letter-spacing:-0.912px;">Paste</div>
<div style="position:absolute;left:780.30px;top:278px;font:normal normal 13.4px/17px 'Liberation Sans',sans-serif;color:#2b2b2b;white-space:pre;letter-spacing:-0.003px;">Clipboard</div>
<div style="position:absolute;left:981.30px;top:278px;font:normal normal 13.4px/17px 'Liberation Sans',sans-serif;color:#2b2b2b;white-space:pre;letter-spacing:-0.549px;">Font</div>
<div style="position:absolute;left:1208.00px;top:278px;font:normal normal 13.4px/17px 'Liberation Sans',sans-serif;color:#2b2b2b;white-space:pre;letter-spacing:-0.205px;">Paragraph</div>
<div style="position:absolute;left:1354.50px;top:278px;font:normal normal 13.4px/17px 'Liberation Sans',sans-serif;color:#2b2b2b;white-space:pre;letter-spacing:-0.828px;">Styles</div>
<div style="position:absolute;left:866px;top:189px;width:172px;height:28px;background:#d5d5d5;border:1px solid #8e8e8e"></div>
<div style="position:absolute;left:1038px;top:189px;width:52px;height:28px;background:#d5d5d5;border:1px solid #8e8e8e;border-left:1px solid #9c9c9c"></div>
<div style="position:absolute;left:869.50px;top:194px;font:normal normal 15px/19px 'Liberation Sans',sans-serif;color:#2b2b2b;white-space:pre;letter-spacing:-0.266px;">Times New Roman</div>
<div style="position:absolute;left:1042.00px;top:194px;font:normal normal 15px/19px 'Liberation Sans',sans-serif;color:#2b2b2b;white-space:pre;letter-spacing:-0.539px;">11</div>
<div style="position:absolute;left:1361.60px;top:233px;font:normal normal 15px/19px 'Liberation Sans',sans-serif;color:#2b2b2b;white-space:pre;letter-spacing:-0.577px;">Styles</div>
<div style="position:absolute;left:1418px;top:189px;width:38px;height:38px;background:#d3d3d3;border:1px solid #9a9a9a"></div>
<div style="position:absolute;left:1414.70px;top:232px;font:normal normal 15px/19px 'Liberation Sans',sans-serif;color:#2b2b2b;white-space:pre;letter-spacing:-0.025px;">Editing</div>
<svg style="left:0;top:0" width="1630" height="300"><path d="M861.500 189v103M1146.500 189v103M1350.500 189v103M1410.500 189v103M1464.500 189v103" stroke="#9c9c9c"/><path d="M1039.500 221v23M1024.500 248v23M1085.500 248v23M1271.500 190v24M1285.500 219v24M1233.500 246v24M1280.500 246v24M1315.500 246v24" stroke="#9c9c9c"/><rect x="792" y="197" width="27.200" height="31" rx="2" fill="#e8bf6a"/><rect x="797.300" y="195.500" width="16.200" height="5.500" rx="1" fill="#4d4d4d"/><rect x="802" y="192.800" width="7" height="4" rx="1" fill="#4d4d4d"/><rect x="804.300" y="194.300" width="2.400" height="1.700" fill="#c9c9c9"/><path d="M811.500 211.500h10l4.500 4.500v15h-14.500z" fill="#fff" stroke="#666" stroke-width="1"/><path d="M821.500 211.500v4.500h4.500" fill="none" stroke="#666"/><path d="M802.8 260.9h6.4l-3.2 3.400z" fill="#444"/><g fill="none" stroke="#8b8b8b" stroke-width="1.500"><path d="M838.500 194l8.500 12M847.500 194l-8.500 12"/><circle cx="838.500" cy="207.500" r="2.600"/><circle cx="847.500" cy="207.500" r="2.600"/></g><g fill="#f4f4f4" stroke="#666" stroke-width="1"><path d="M835.500 221.500h7l3 3v9h-10z"/><path d="M841.500 226.500h7l3 3v9h-10z"/></g><path d="M843.500 231.500h5.500M843.500 234h5.500" stroke="#777"/><path d="M836 256l6-4l5 6l-5 5z" fill="#e8bf6a"/><path d="M842.500 252.500l5-3.500l2.500 3.500l-4.500 3.500z" fill="#444"/><path d="M848 250.500l3-2" stroke="#444" stroke-width="2"/><path d="M847.5 288.5v-6h6" fill="none" stroke="#444" stroke-width="1.100"/><path d="M850.5 285.5l5 5M855.8 286.8v4h-4" fill="none" stroke="#444" stroke-width="1.300"/><path d="M1131.5 288.5v-6h6" fill="none" stroke="#444" stroke-width="1.100"/><path d="M1134.5 285.5l5 5M1139.8 286.8v4h-4" fill="none" stroke="#444" stroke-width="1.300"/><path d="M1336 288.5v-6h6" fill="none" stroke="#444" stroke-width="1.100"/><path d="M1339 285.5l5 5M1344.3 286.8v4h-4" fill="none" stroke="#444" stroke-width="1.300"/><path d="M1396 288.5v-6h6" fill="none" stroke="#444" stroke-width="1.100"/><path d="M1399 285.5l5 5M1404.3 286.8v4h-4" fill="none" stroke="#444" stroke-width="1.300"/><path d="M1025.8 201.4h6.4l-3.2 3.400z" fill="#444"/><path d="M1078.3 201.4h6.4l-3.2 3.400z" fill="#444"/><text x="1095" y="200" font-family="'Liberation Sans',sans-serif" font-size="10.500" fill="#333" textLength="16" lengthAdjust="spacingAndGlyphs">abc</text><text x="1100" y="212" font-family="'Liberation Sans',sans-serif" font-size="14" font-weight="bold" font-style="italic" fill="#2b579a">A</text><rect x="1119.500" y="192.500" width="19" height="19" fill="#fff" stroke="#2b579a" stroke-width="1.200"/><text x="1129" y="208.500" font-family="'Liberation Sans',sans-serif" font-size="17" text-anchor="middle" fill="#222">A</text><text x="873.500" y="237.500" font-family="'Liberation Sans',sans-serif" font-size="16" font-weight="bold" fill="#2b2b2b" textLength="9.600" lengthAdjust="spacingAndGlyphs">B</text><text x="900.500" y="237.500" font-family="'Liberation Serif',serif" font-size="18" font-weight="bold" font-style="italic" fill="#333">I</text><text x="925" y="236.500" font-family="'Liberation Sans',sans-serif" font-size="15.500" fill="#2b2b2b" stroke="#2b2b2b" stroke-width=".700">U</text><path d="M925 239.500h10.500" stroke="#333" stroke-width="1.300"/><path d="M946.8 229.4h6.4l-3.2 3.400z" fill="#444"/><text x="959.500" y="236.500" font-family="'Liberation Sans',sans-serif" font-size="12.500" fill="#333" textLength="20" lengthAdjust="spacingAndGlyphs">abc</text><path d="M958.500 232.500h22.500" stroke="#333" stroke-width="1"/><text x="988.500" y="237" font-family="'Liberation Sans',sans-serif" font-size="16" font-weight="bold" fill="#333">x</text><text x="998" y="240" font-family="'Liberation Sans',sans-serif" font-size="9" fill="#2b579a">2</text><text x="1015" y="237" font-family="'Liberation Sans',sans-serif" font-size="16" font-weight="bold" fill="#333">x</text><text x="1024.500" y="229.500" font-family="'Liberation Sans',sans-serif" font-size="9" fill="#2b579a">2</text><text x="1049" y="232" font-family="'Liberation Sans',sans-serif" font-size="13" fill="#333">A</text><g transform="rotate(-40 1059 235)"><rect x="1052" y="231" width="14" height="8" rx="1.500" fill="#e06b80"/></g><text x="871" y="266" font-family="'Liberation Sans',sans-serif" font-size="21" fill="#f2f7fd" stroke="#2f6fc0" stroke-width="1.200">A</text><path d="M892.8 257.9h6.4l-3.2 3.400z" fill="#444"/><text x="907.500" y="258" font-family="'Liberation Sans',sans-serif" font-size="11.500" fill="#333">ab</text><path d="M915 262.500l9-9.500l2.500 2.500l-9 9.500z" fill="#444"/><rect x="907" y="264.500" width="20" height="4.800" fill="#fff200"/><path d="M932.8 257.9h6.4l-3.2 3.400z" fill="#444"/><text x="956" y="262.500" font-family="'Liberation Sans',sans-serif" font-size="18.500" text-anchor="middle" fill="#222">A</text><rect x="946" y="264.500" width="20" height="4.800" fill="#ee0000"/><path d="M971.3 257.9h6.4l-3.2 3.400z" fill="#444"/><text x="986" y="264" font-family="'Liberation Sans',sans-serif" font-size="15" fill="#444" textLength="18.500" lengthAdjust="spacingAndGlyphs">Aa</text><path d="M1008.8 257.9h6.4l-3.2 3.400z" fill="#444"/><text x="1037" y="266" font-family="'Liberation Sans',sans-serif" font-size="16.500" fill="#444">A</text><path d="M1048 254.500l2.500-3l2.500 3z" fill="#2b579a"/><text x="1062" y="266" font-family="'Liberation Sans',sans-serif" font-size="14.500" fill="#444">A</text><path d="M1071.500 251.500l2.500 3l2.500-3z" fill="#2b579a"/><rect x="1093.500" y="249.500" width="18" height="18" fill="#c9c9c9"/><text x="1102.500" y="265" font-family="'Liberation Sans',sans-serif" font-size="18" text-anchor="middle" fill="#222">A</text><circle cx="1129" cy="258.500" r="8.800" fill="#fff" stroke="#333" stroke-width="1.100"/><text x="1129" y="262.500" font-family="'Liberation Sans','Noto Sans CJK SC',sans-serif" font-size="10.500" text-anchor="middle" fill="#222">字</text><circle cx="1156" cy="194.5" r="1.600" fill="#2b579a"/><circle cx="1156" cy="201.5" r="1.600" fill="#2b579a"/><circle cx="1156" cy="208.5" r="1.600" fill="#2b579a"/><path d="M1160.5 194.5h12.5" stroke="#444" stroke-width="1.2"/><path d="M1160.5 201.5h12.5" stroke="#444" stroke-width="1.2"/><path d="M1160.5 208.5h12.5" stroke="#444" stroke-width="1.2"/><path d="M1179.8 200.2h6.4l-3.2 3.400z" fill="#444"/><text x="1193" y="197" font-family="'Liberation Sans',sans-serif" font-size="6.500" fill="#2b579a" font-weight="bold">1</text><text x="1193" y="204" font-family="'Liberation Sans',sans-serif" font-size="6.500" fill="#2b579a" font-weight="bold">2</text><text x="1193" y="211" font-family="'Liberation Sans',sans-serif" font-size="6.500" fill="#2b579a" font-weight="bold">3</text><path d="M1199.5 194.5h12.5" stroke="#444" stroke-width="1.2"/><path d="M1199.5 201.5h12.5" stroke="#444" stroke-width="1.2"/><path d="M1199.5 208.5h12.5" stroke="#444" stroke-width="1.2"/><path d="M1218.8 200.2h6.4l-3.2 3.400z" fill="#444"/><text x="1232.500" y="197" font-family="'Liberation Sans',sans-serif" font-size="6.500" fill="#2b579a" font-weight="bold">1</text><text x="1236.500" y="204.500" font-family="'Liberation Sans',sans-serif" font-size="7" fill="#2b579a" font-weight="bold">a</text><text x="1241" y="211" font-family="'Liberation Sans',sans-serif" font-size="6.500" fill="#2b579a" font-weight="bold">i</text><path d="M1238 194.500h13M1242.500 201.500h8.500M1245.500 208.500h5.500" stroke="#444" stroke-width="1.200"/><path d="M1255.8 200.2h6.4l-3.2 3.400z" fill="#444"/><path d="M1280 194.5h18" stroke="#444" stroke-width="1.2"/><path d="M1289.3 198.3h8.7" stroke="#444" stroke-width="1.2"/><path d="M1289.3 202.05h8.7" stroke="#444" stroke-width="1.2"/><path d="M1289.3 205.8h8.7" stroke="#444" stroke-width="1.2"/><path d="M1280 209.5h18" stroke="#444" stroke-width="1.2"/><path d="M1288 202h-7M1284 198.700l-3.300 3.300l3.300 3.300" fill="none" stroke="#2b579a" stroke-width="1.700"/><path d="M1306 194.5h18" stroke="#444" stroke-width="1.2"/><path d="M1315.3 198.3h8.7" stroke="#444" stroke-width="1.2"/><path d="M1315.3 202.05h8.7" stroke="#444" stroke-width="1.2"/><path d="M1315.3 205.8h8.7" stroke="#444" stroke-width="1.2"/><path d="M1306 209.5h18" stroke="#444" stroke-width="1.2"/><path d="M1306 202h7M1310 198.700l3.300 3.300l-3.300 3.300" fill="none" stroke="#2b579a" stroke-width="1.700"/><path d="M1157.0 225.80h14" stroke="#444" stroke-width="1.200"/><path d="M1157.0 228.83h10.5" stroke="#444" stroke-width="1.200"/><path d="M1157.0 231.86h14" stroke="#444" stroke-width="1.200"/><path d="M1157.0 234.89h10.5" stroke="#444" stroke-width="1.200"/><path d="M1182.0 225.80h16" stroke="#444" stroke-width="1.200"/><path d="M1184.5 228.83h11" stroke="#444" stroke-width="1.200"/><path d="M1182.0 231.86h16" stroke="#444" stroke-width="1.200"/><path d="M1184.5 234.89h11" stroke="#444" stroke-width="1.200"/><path d="M1208.5 225.80h14.5" stroke="#444" stroke-width="1.200"/><path d="M1212.5 228.83h10.5" stroke="#444" stroke-width="1.200"/><path d="M1208.5 231.86h14.5" stroke="#444" stroke-width="1.200"/><path d="M1212.5 234.89h10.5" stroke="#444" stroke-width="1.200"/><rect x="1229" y="217.500" width="26" height="26.500" fill="#9b9b9b"/><path d="M1234.2 225.80h15.6" stroke="#444" stroke-width="1.200"/><path d="M1234.2 228.83h15.6" stroke="#444" stroke-width="1.200"/><path d="M1234.2 231.86h15.6" stroke="#444" stroke-width="1.200"/><path d="M1234.2 234.89h15.6" stroke="#444" stroke-width="1.200"/><path d="M1259.500 221v18.500M1276.500 221v18.500" stroke="#2b579a" stroke-width="1.200"/><path d="M1262 223.500h12M1264.500 221l-2.500 2.500l2.500 2.500M1271.500 221l2.500 2.500l-2.500 2.500" fill="none" stroke="#2b579a" stroke-width="1.300"/><path d="M1261.5 229.2h13.5" stroke="#444" stroke-width="1.2"/><path d="M1261.5 231.48h13.5" stroke="#444" stroke-width="1.2"/><path d="M1261.5 233.76h13.5" stroke="#444" stroke-width="1.2"/><path d="M1261.5 236.04h13.5" stroke="#444" stroke-width="1.2"/><path d="M1261.5 238.32h13.5" stroke="#444" stroke-width="1.2"/><path d="M1297 221.500v17.500M1293.500 225l3.500-3.500l3.500 3.500M1293.500 235.500l3.500 3.500l3.500-3.500" fill="none" stroke="#2b579a" stroke-width="1.700"/><path d="M1301.5 224.8h9.5" stroke="#444" stroke-width="1.2"/><path d="M1301.5 228.77h9.5" stroke="#444" stroke-width="1.2"/><path d="M1301.5 232.74h9.5" stroke="#444" stroke-width="1.2"/><path d="M1301.5 236.71h9.5" stroke="#444" stroke-width="1.2"/><path d="M1317.3 228.0h6.4l-3.2 3.400z" fill="#444"/><path d="M1158.500 258l6.500-7.500l6.500 6.500l-7 6z" fill="#f4f4f4" stroke="#444" stroke-width="1"/><path d="M1163 252.500v-3.500a2 2 0 0 1 4 0v5" fill="none" stroke="#444"/><path d="M1171.500 257q2 3.500 0 4.500q-2-1 0-4.500z" fill="#444"/><rect x="1154.500" y="264.500" width="18" height="3.500" fill="#e9e9e9" stroke="#aaa" stroke-width=".5"/><path d="M1179.8 256.0h6.4l-3.2 3.400z" fill="#444"/><rect x="1194.500" y="249.500" width="16" height="16" fill="#f6f6f6"/><path d="M1194.500 249.500h16v16h-16zM1202.500 249.500v16M1194.500 257.500h16" fill="none" stroke="#666" stroke-dasharray="1.300 1.300"/><path d="M1218.8 256.0h6.4l-3.2 3.400z" fill="#444"/><text x="1251.500" y="267" font-family="'Liberation Sans',sans-serif" font-size="17" text-anchor="middle" fill="#333" stroke="#333" stroke-width=".500" textLength="18" lengthAdjust="spacingAndGlyphs">A</text><path d="M1242.500 251h18M1245 248.500l-2.500 2.500l2.500 2.500M1258 248.500l2.500 2.500l-2.500 2.500" fill="none" stroke="#2b579a" stroke-width="1.300"/><path d="M1265.3 256.0h6.4l-3.2 3.400z" fill="#444"/><text x="1291" y="258" font-family="'Liberation Sans',sans-serif" font-size="10.500" fill="#2b579a">A</text><text x="1291" y="267.500" font-family="'Liberation Sans',sans-serif" font-size="10.500" fill="#7b3fa0">Z</text><path d="M1303.500 249.500v17M1300 263l3.500 3.500l3.500-3.500" fill="none" stroke="#444" stroke-width="1.300"/><text x="1326" y="265" font-family="'Liberation Sans',sans-serif" font-size="18" fill="#444">¶</text><text x="1361" y="226" font-family="'Liberation Sans',sans-serif" font-size="42" fill="#2b579a" stroke="#2b579a" stroke-width="1.200">A</text><path d="M1383 217l13-16.500l3 2.500l-12 17z" fill="#555"/><path d="M1378 228q2-8 8-8.500q4 2 1 6.500q-3 3-9 2z" fill="#2b579a"/><ellipse cx="1384.500" cy="222.500" rx="2.800" ry="2" fill="#fff"/><path d="M1376.8 260.9h6.4l-3.2 3.400z" fill="#444"/><path d="M1434.3 259.4h6.4l-3.2 3.400z" fill="#444"/><path d="M1618.500 289l5.500-5.500l5.500 5.500" fill="none" stroke="#333" stroke-width="1.500"/></svg>
<svg style="left:0;top:0" width="1630" height="300"><circle cx="1440.500" cy="206.200" r="5.300" fill="#fff" stroke="#2b579a" stroke-width="1.800"/><path d="M1436.500 210.200l-6.500 6.500" stroke="#2b579a" stroke-width="2.200"/></svg>
<div class="abs" style="left:777px;top:297px;width:843px;height:636px;background:#fff;overflow:hidden">
<div class="abs" style="left:-777px;top:-297px;width:1630px;height:1038px">
<div style="position:absolute;left:814.00px;top:266px;font:normal normal 29.33px/34px 'Liberation Serif',serif;color:#000;white-space:pre;word-spacing:3px;">A study of modern learning and multimedia retrieval methods to</div>
<div style="position:absolute;left:809.00px;top:304px;font:normal normal 29.33px/34px 'Liberation Serif',serif;color:#000;white-space:pre;word-spacing:0px;">programming and to develop a multimedia application.</div>
<div style="position:absolute;left:809.00px;top:359px;font:normal normal 29.33px/34px 'Liberation Serif',serif;color:#000;white-space:pre;word-spacing:3.3px;">Students are given an image retrieval program written using Python. Students</div>
<div style="position:absolute;left:809.00px;top:397px;font:normal normal 29.33px/34px 'Liberation Serif',serif;color:#000;white-space:pre;word-spacing:0px;">this program to provide additional features.</div>
<div style="position:absolute;left:809.00px;top:452px;font:normal normal 29.33px/34px 'Liberation Serif',serif;color:#000;white-space:pre;word-spacing:0.15px;">Alternatively, you may choose to implement this course project based on</div>
<div style="position:absolute;left:809.00px;top:507px;font:normal normal 29.33px/34px 'Liberation Serif',serif;color:#000;white-space:pre;word-spacing:0px;">If so,  you should do the implementation yourself.</div>
<div style="position:absolute;left:809.00px;top:562px;font:normal normal 29.33px/34px 'Liberation Serif',serif;color:#000;white-space:pre;word-spacing:5.7px;">(We also provide an image retrieval program written using C++/C# for</div>
<div style="position:absolute;left:809.00px;top:600px;font:normal normal 29.33px/34px 'Liberation Serif',serif;color:#000;white-space:pre;word-spacing:0px;">familiar with C++.)</div>
<div style="position:absolute;left:809.00px;top:655px;font:normal bold 29.33px/34px 'Liberation Serif',serif;color:#ff0000;white-space:pre;word-spacing:0.4px;text-decoration:underline;text-decoration-thickness:2.4px;text-underline-offset:3.5px;text-decoration-skip-ink:none;">You will receive a zero mark if you use someone else’s implementation</div>
<div style="position:absolute;left:809.00px;top:710px;font:normal bold 29.33px/34px 'Liberation Serif',serif;color:#00b050;white-space:pre;word-spacing:0.15px;text-decoration:underline;text-decoration-thickness:2.4px;text-underline-offset:3.5px;text-decoration-skip-ink:none;">However, it is fine to use common library functions such as pillow,</div>
<div style="position:absolute;left:809.00px;top:820px;font:normal bold 37.33px/43px 'Liberation Serif',serif;color:#000;white-space:pre;word-spacing:0px;">2.</div>
<div style="position:absolute;left:869.00px;top:820px;font:normal bold 37.33px/43px 'Liberation Serif',serif;color:#000;white-space:pre;letter-spacing:0.093px;">Requirements of the Assignment</div>
<div style="position:absolute;left:809.00px;top:896px;font:normal normal 29.33px/34px 'Liberation Serif',serif;color:#000;white-space:pre;word-spacing:0.45px;">This assignment can be carried out as individual or group projects. The</div>
</div></div>
<div style="position:absolute;left:1620px;top:297px;width:10px;height:636px;background:#666;"></div>
<div style="position:absolute;left:776px;top:954px;width:854px;height:1px;background:#5b5b5b;"></div>
<div style="position:absolute;left:1333px;top:955px;width:42px;height:27px;background:#4b4b4b;"></div>
<div style="position:absolute;left:784.40px;top:959px;font:normal normal 13.4px/17px 'Liberation Sans',sans-serif;color:#f2f2f2;white-space:pre;letter-spacing:-0.109px;">Page 1 of 4</div>
<div style="position:absolute;left:872.30px;top:959px;font:normal normal 13.4px/17px 'Liberation Sans',sans-serif;color:#f2f2f2;white-space:pre;letter-spacing:-0.193px;">1305 words</div>
<div style="position:absolute;left:995.50px;top:959px;font:normal normal 13.4px/17px 'Liberation Sans',sans-serif;color:#f2f2f2;white-space:pre;letter-spacing:-0.281px;">English (United States)</div>
<div style="position:absolute;left:1587.00px;top:959px;font:normal normal 13.4px/17px 'Liberation Sans',sans-serif;color:#f2f2f2;white-space:pre;letter-spacing:-0.713px;">160%</div>
<svg style="left:0;top:0" width="1630" height="1038"><path d="M968.500 961v14.500M968.500 961.500h-7.500v11.500h7.500M968.500 973h8v-3M968.500 961.500h2.500M966.500 973.500l2 2l2-2" fill="none" stroke="#f2f2f2" stroke-width="1.100"/><path d="M972 963l4.500 4.500M976.500 963l-4.500 4.500" stroke="#f2f2f2" stroke-width="1.400"/><rect x="1149.500" y="963.500" width="12" height="11" fill="none" stroke="#f2f2f2" stroke-width="1.100"/><path d="M1149.500 966.500h12" stroke="#f2f2f2" stroke-width="1.100"/><path d="M1152 969.500h8M1152 972h8" stroke="#f2f2f2" stroke-width="1.200" stroke-dasharray="1.600 1.600"/><circle cx="1150.800" cy="962.800" r="3.300" fill="#f2f2f2"/><path d="M1304 962.500h7.500v11h-7.500zM1311.500 962.500h7.500v11h-7.500z" fill="none" stroke="#f2f2f2" stroke-width="1.100"/><path d="M1305.5 965.0h4.5" stroke="#f2f2f2" stroke-width="1"/><path d="M1305.5 967.5h4.5" stroke="#f2f2f2" stroke-width="1"/><path d="M1305.5 970.0h4.5" stroke="#f2f2f2" stroke-width="1"/><path d="M1313 965.0h4.5" stroke="#f2f2f2" stroke-width="1"/><path d="M1313 967.5h4.5" stroke="#f2f2f2" stroke-width="1"/><path d="M1313 970.0h4.5" stroke="#f2f2f2" stroke-width="1"/><rect x="1346" y="961.500" width="15" height="15" fill="none" stroke="#f2f2f2" stroke-width="1.200"/><path d="M1348.5 965.0h10" stroke="#f2f2f2" stroke-width="1"/><path d="M1348.5 967.8h10" stroke="#f2f2f2" stroke-width="1"/><path d="M1348.5 970.6h10" stroke="#f2f2f2" stroke-width="1"/><path d="M1348.5 973.4h10" stroke="#f2f2f2" stroke-width="1"/><rect x="1388" y="962.500" width="14" height="11" fill="none" stroke="#f2f2f2" stroke-width="1.100"/><path d="M1390 965.5h7" stroke="#f2f2f2" stroke-width="1"/><path d="M1390 968.0h7" stroke="#f2f2f2" stroke-width="1"/><path d="M1390 970.5h7" stroke="#f2f2f2" stroke-width="1"/><circle cx="1402" cy="973" r="3.800" fill="#666" stroke="#f2f2f2" stroke-width="1"/><path d="M1423 968.500h8" stroke="#f2f2f2" stroke-width="1.600"/><path d="M1434 968.500h126" stroke="#f2f2f2" stroke-width="1"/><path d="M1498.500 964.500v8" stroke="#f2f2f2" stroke-width="1"/><rect x="1504.500" y="961" width="5" height="15" fill="#f2f2f2"/><path d="M1564.500 968.500h9M1569 964v9" stroke="#f2f2f2" stroke-width="1.600"/></svg>
</div></div>
<div class="abs" style="left:790px;top:643px;width:818px;height:74px;border:4.2px solid #4fd806;border-radius:5px"></div>
<div class="abs" style="left:231px;top:94px;width:205.8px;height:4.3px;background:#4fd806;border-radius:2px"></div>
<div class="abs" style="left:926.5px;top:144px;width:416px;height:4.5px;background:#4fd806;border-radius:2px"></div>
<svg style="left:0;top:0" width="1630" height="1038"><line x1="379.4" y1="125" x2="424" y2="401" stroke="#4fd806" stroke-width="4.400" stroke-linecap="butt"/>
<polygon points="426.600,418.500 415.200,395.600 423.800,400.200 431,393" fill="#4fd806"/></svg>
<div class="step" style="left:386.1px;top:89.1px;width:43.0px;height:43.0px;line-height:43.0px">1</div>
<div style="position:absolute;left:398.6px;top:118.2px;width:6.4px;height:5.6px;background:#f03b3c;"></div>
<div style="position:absolute;left:409.6px;top:118.2px;width:6.4px;height:5.6px;background:#f03b3c;"></div>
<div class="step" style="left:219.0px;top:440.2px;width:43.0px;height:43.0px;line-height:43.0px">2</div>
<div class="step" style="left:215.3px;top:582.3px;width:43.0px;height:43.0px;line-height:43.0px">3</div>
<div class="step" style="left:915.1px;top:94.8px;width:43.0px;height:43.0px;line-height:43.0px">4</div>
<div class="step" style="left:1053.0px;top:606.5px;width:43.0px;height:43.0px;line-height:43.0px">5</div>
<svg style="left:0;top:0" width="1630" height="1038"><path d="M195.600 234.300L195.600 259.800L201 254.300L204.600 261.500L209.500 259.300L206 252.600L213.600 252.600Z" fill="#fff" stroke="#000" stroke-width="1.600" stroke-linejoin="miter"/><g><rect x="379" y="276" width="3" height="46" fill="#000"/><rect x="382" y="276" width="2" height="46" fill="#fff"/><rect x="384" y="276" width="1" height="46" fill="#000"/><rect x="360" y="295" width="46" height="3" fill="#000"/><rect x="360" y="298" width="46" height="2" fill="#fff"/><rect x="360" y="300" width="46" height="1" fill="#000"/><circle cx="382.500" cy="297.800" r="4.600" fill="#fff"/></g></svg>
</body></html>
